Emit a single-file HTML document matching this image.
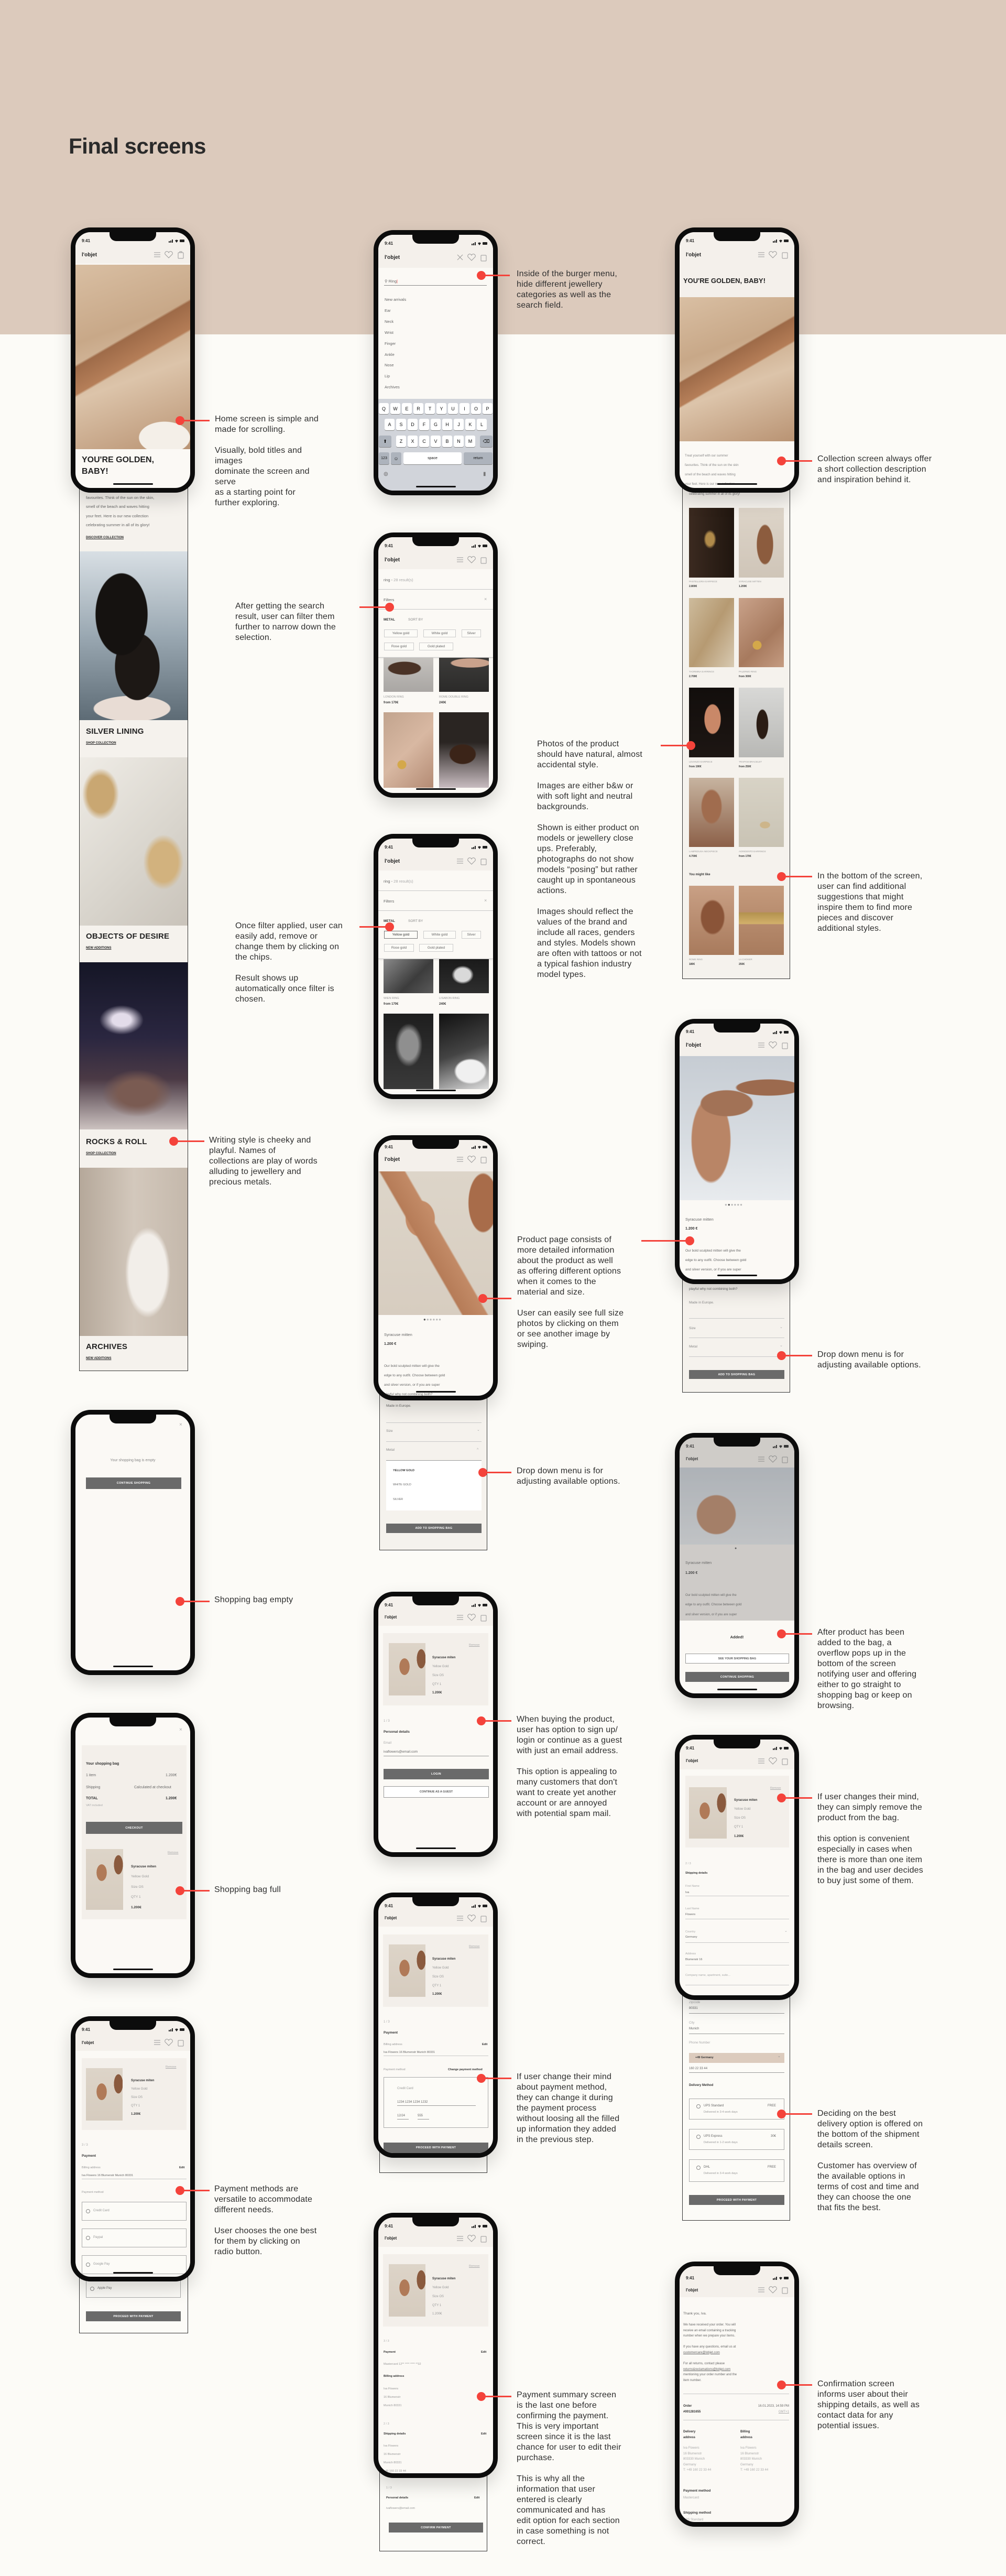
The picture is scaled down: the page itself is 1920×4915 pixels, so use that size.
<!DOCTYPE html>
<html><head><meta charset="utf-8">
<style>
*{box-sizing:border-box}
body{margin:0;width:1920px;height:4915px;position:relative;background:#fcfbf7;font-family:"Liberation Sans",sans-serif;overflow:hidden;color:#333}
.band{position:absolute;left:0;top:0;width:1920px;height:638px;background:#dccabc}
h1{position:absolute;left:131px;top:255px;margin:0;font-size:42px;font-weight:bold;color:#2a2a2a;letter-spacing:-0.5px}
.ph{position:absolute;width:237px;height:506px;border:9px solid #0c0c0c;border-radius:38px;background:#fbf9f5;overflow:hidden;box-shadow:0 14px 34px rgba(0,0,0,.16);z-index:3}
.notch{position:absolute;left:65px;top:-1px;width:89px;height:18px;background:#0c0c0c;border-radius:0 0 13px 13px;z-index:5}
.sb{position:absolute;left:0;top:0;width:100%;height:60px;background:#f4f0eb}
.tm{position:absolute;left:12px;top:12px;font-size:8px;font-weight:bold;color:#222}
.sic{position:absolute;right:11px;top:13px}
.lg{position:absolute;left:12px;top:38px;font-size:10px;font-weight:bold;color:#222}
.hic{position:absolute;right:9px;top:35px}
.hb{position:absolute;left:72px;bottom:6px;width:76px;height:3px;background:#111;border-radius:2px;z-index:6}
.t{position:absolute;font-size:7px;color:#666;white-space:nowrap;line-height:1.2}
.b{font-weight:bold;color:#333}
.btn{position:absolute;background:#6a6a6a;color:#fff;font-size:5.5px;font-weight:bold;text-align:center;letter-spacing:.3px;display:flex;align-items:center;justify-content:center}
.obtn{position:absolute;border:1px solid #999;color:#555;font-size:5.5px;font-weight:bold;text-align:center;display:flex;align-items:center;justify-content:center;background:#fff}
.ln{position:absolute;height:1px;background:#c8c8c8}
.st{position:absolute;background:#f5f2ed;border:1px solid #333;border-top:none;z-index:1;overflow:hidden}
.stw{background:#fcfbf7}
.card{position:absolute;left:9px;width:201px;height:138px;background:#f3efea}
.cimg{position:absolute;left:11px;top:19px;width:70px;height:100px;background:radial-gradient(ellipse 14px 30px at 62px 30px,#8a5a3e 60%,transparent 62%),radial-gradient(ellipse 16px 26px at 30px 45px,#b07a58 60%,transparent 62%),linear-gradient(#ddd4c8,#d6ccbf)}
.img{position:absolute}
.chip{position:absolute;height:15px;border:1px solid #ccc;font-size:6.5px;color:#666;display:flex;align-items:center;justify-content:center;background:#fcfbf7}
.box{position:absolute;border:1px solid #aaa;background:#fcfbf7}
.rad{position:absolute;width:8px;height:8px;border:1px solid #888;border-radius:50%}
.dot{position:absolute;width:17px;height:17px;margin:-8px 0 0 -8px;background:#f4433b;border-radius:50%;z-index:8}
.line{position:absolute;height:3px;margin-top:-1px;background:#f4433b;z-index:7}
.an{position:absolute;font-size:16px;line-height:20px;color:#2e2e2e;white-space:nowrap;letter-spacing:.2px;z-index:8}
.key{position:absolute;background:#fff;border-radius:3px;font-size:9px;color:#111;display:flex;align-items:center;justify-content:center;box-shadow:0 1px 0 #888}
.title{position:absolute;font-size:15px;font-weight:bold;color:#222;letter-spacing:.2px}
.sub{position:absolute;font-size:6px;font-weight:bold;color:#222;text-decoration:underline}
</style></head><body>
<div class="band"></div>
<h1>Final screens</h1>

<!-- ===== COLUMN 1 ===== -->
<!-- Home strip -->
<div class="st" style="left:151px;top:900px;width:208px;height:1716px">
  <div class="t" style="left:12px;top:45px;font-size:7.5px">favourites. Think of the sun on the skin,</div>
  <div class="t" style="left:12px;top:62px;font-size:7.5px">smell of the beach and waves hitting</div>
  <div class="t" style="left:12px;top:80px;font-size:7.5px">your feet. Here is our new collection</div>
  <div class="t" style="left:12px;top:97px;font-size:7.5px">celebrating summer in all of its glory!</div>
  <div class="sub" style="left:12px;top:123px">DISCOVER COLLECTION</div>
  <div class="img" style="left:0;top:152px;width:208px;height:322px;background:radial-gradient(ellipse 70px 110px at 80px 120px,#151210 70%,transparent 72%),radial-gradient(ellipse 60px 90px at 110px 220px,#1d1815 70%,transparent 72%),radial-gradient(ellipse 120px 40px at 100px 300px,#e8dcd4 60%,transparent 62%),linear-gradient(#d8dfe4,#9aa8b2 50%,#5d6b75)"></div>
  <div class="title" style="left:12px;top:487px">SILVER LINING</div>
  <div class="sub" style="left:12px;top:515px">SHOP COLLECTION</div>
  <div class="img" style="left:0;top:545px;width:208px;height:321px;background:radial-gradient(ellipse 50px 70px at 40px 70px,#c9a772 50%,transparent 70%),radial-gradient(ellipse 55px 75px at 160px 200px,#d2b27e 50%,transparent 70%),linear-gradient(135deg,#efece6,#d8d4cc 60%,#c9c3ba)"></div>
  <div class="title" style="left:12px;top:878px">OBJECTS OF DESIRE</div>
  <div class="sub" style="left:12px;top:906px">NEW ADDITIONS</div>
  <div class="img" style="left:0;top:936px;width:208px;height:319px;background:radial-gradient(ellipse 60px 40px at 80px 110px,#e3dcea 30%,transparent 70%),radial-gradient(ellipse 90px 60px at 110px 250px,#7a5b52 40%,transparent 75%),linear-gradient(#151626,#2a2640 45%,#4b3a45 70%,#ccc2c0)"></div>
  <div class="title" style="left:12px;top:1270px">ROCKS &amp; ROLL</div>
  <div class="sub" style="left:12px;top:1298px">SHOP COLLECTION</div>
  <div class="img" style="left:0;top:1328px;width:208px;height:321px;background:radial-gradient(ellipse 60px 120px at 130px 200px,#f2eee9 60%,transparent 72%),linear-gradient(90deg,#b5a89a,#d3c8bc 50%,#c4b8ab)"></div>
  <div class="title" style="left:12px;top:1661px">ARCHIVES</div>
  <div class="sub" style="left:12px;top:1689px">NEW ADDITIONS</div>
</div>
<!-- Home phone -->
<div class="ph" style="left:135px;top:434px">
  <div class="notch"></div>
  <div class="sb"></div><div class="tm">9:41</div>
  <svg class="sic" width="30" height="7"><rect x="0" y="4" width="2" height="3" fill="#222"/><rect x="3" y="3" width="2" height="4" fill="#222"/><rect x="6" y="1" width="2" height="6" fill="#222"/><path d="M12 3 Q15 0 18 3 L15 7Z" fill="#222"/><rect x="21" y="1" width="9" height="5" rx="1" fill="#222"/></svg>
  <div class="lg">l'objet</div>
  <svg class="hic" width="62" height="16"><g fill="none" stroke="#999" stroke-width="1"><path d="M2 4h12M2 8h12M2 12h12"/><path d="M30 14 L23 7 A3.5 3.5 0 0 1 30 4 A3.5 3.5 0 0 1 37 7 Z"/><rect x="48" y="4" width="10" height="11" rx="1"/><path d="M51 4 V2 H55 V4"/></g></svg>
  <div class="img" style="left:0;top:62px;width:219px;height:352px;background:linear-gradient(150deg,transparent 40%,rgba(150,95,60,.85) 41%,rgba(175,115,75,.85) 52%,transparent 53%),radial-gradient(ellipse 80px 50px at 170px 330px,#f4efe8 60%,transparent 62%),linear-gradient(160deg,#d9bfa3,#c8a888 35%,#dcc4aa 60%,#b99373)"></div>
  <div class="t b" style="left:12px;top:424px;font-size:16px;line-height:22px;color:#222;white-space:normal;width:200px">YOU'RE GOLDEN,<br>BABY!</div>
  <div class="hb"></div>
</div>

<!-- Bag empty -->
<div class="ph" style="left:135px;top:2690px">
  <div class="notch"></div>
  <div class="t" style="left:198px;top:14px;font-size:10px;color:#aaa">×</div>
  <div class="t" style="left:0;width:219px;text-align:center;top:84px;color:#888">Your shopping bag is empty</div>
  <div class="btn" style="left:20px;top:120px;width:182px;height:22px">CONTINUE SHOPPING</div>
  <div class="hb"></div>
</div>

<!-- Bag full -->
<div class="ph" style="left:135px;top:3268px">
  <div class="notch"></div>
  <div class="t" style="left:198px;top:18px;font-size:10px;color:#aaa">×</div>
  <div class="card" style="left:12px;top:53px;width:200px;height:332px"></div>
  <div class="t b" style="left:20px;top:85px">Your shopping bag</div>
  <div class="t" style="left:20px;top:107px">1 item</div><div class="t" style="left:172px;top:107px">1.200€</div>
  <div class="t" style="left:20px;top:130px">Shipping</div><div class="t" style="left:112px;top:130px">Calculated at checkout</div>
  <div class="t b" style="left:20px;top:151px">TOTAL</div><div class="t b" style="left:172px;top:151px">1.200€</div>
  <div class="t" style="left:20px;top:165px;font-size:5.5px;color:#aaa">VAT included</div>
  <div class="btn" style="left:20px;top:199px;width:184px;height:23px">CHECKOUT</div>
  <div class="cimg" style="left:20px;top:251px;width:71px;height:116px"></div>
  <div class="t" style="left:176px;top:255px;font-size:5.5px;text-decoration:underline;color:#aaa">Remove</div>
  <div class="t b" style="left:106px;top:281px;font-size:6.5px">Syracuse miten</div>
  <div class="t" style="left:106px;top:300px;font-size:6.5px;color:#999">Yellow Gold</div>
  <div class="t" style="left:106px;top:320px;font-size:6.5px;color:#999">Size OS</div>
  <div class="t" style="left:106px;top:339px;font-size:6.5px;color:#999">QTY 1</div>
  <div class="t b" style="left:106px;top:359px;font-size:6.5px">1.200€</div>
  <div class="hb"></div>
</div>

<!-- Payment col1 strip -->
<div class="st stw" style="left:151px;top:4300px;width:208px;height:152px">
  <div class="box" style="left:12px;top:51px;width:181px;height:33px"></div>
  <div class="rad" style="left:20px;top:63px"></div><div class="t" style="left:34px;top:63px;font-size:6px">Apple Pay</div>
  <div class="btn" style="left:12px;top:110px;width:181px;height:19px">PROCEED WITH PAYMENT</div>
</div>
<div class="ph" style="left:135px;top:3847px">
  <div class="notch"></div>
  <div class="sb" style="height:57px"></div><div class="tm">9:41</div>
  <svg class="sic" width="30" height="7"><rect x="0" y="4" width="2" height="3" fill="#222"/><rect x="3" y="3" width="2" height="4" fill="#222"/><rect x="6" y="1" width="2" height="6" fill="#222"/><path d="M12 3 Q15 0 18 3 L15 7Z" fill="#222"/><rect x="21" y="1" width="9" height="5" rx="1" fill="#222"/></svg>
  <div class="lg" style="top:37px;font-size:8px">l'objet</div>
  <svg class="hic" width="62" height="16" style="top:33px"><g fill="none" stroke="#999" stroke-width="1"><path d="M2 4h12M2 8h12M2 12h12"/><path d="M30 14 L23 7 A3.5 3.5 0 0 1 30 4 A3.5 3.5 0 0 1 37 7 Z"/><rect x="48" y="4" width="10" height="11" rx="1"/></g></svg>
  <div class="card" style="left:12px;top:71px;width:200px;height:137px"><div class="cimg" style="left:8px;top:19px"></div>
   <div class="t" style="left:160px;top:14px;font-size:5.5px;text-decoration:underline;color:#aaa">Remove</div>
   <div class="t b" style="left:94px;top:40px;font-size:6px">Syracuse miten</div><div class="t" style="left:94px;top:56px;font-size:6px;color:#999">Yellow Gold</div><div class="t" style="left:94px;top:72px;font-size:6px;color:#999">Size OS</div><div class="t" style="left:94px;top:88px;font-size:6px;color:#999">QTY 1</div><div class="t b" style="left:94px;top:104px;font-size:6px">1.200€</div></div>
  <div class="t" style="left:12px;top:234px;font-size:6px;color:#aaa">3 / 3</div>
  <div class="t b" style="left:12px;top:254px;font-size:6.5px">Payment</div>
  <div class="t" style="left:12px;top:277px;font-size:5.5px;color:#999">Billing address</div><div class="t b" style="left:198px;top:277px;font-size:5.5px">Edit</div>
  <div class="t" style="left:12px;top:292px;font-size:5.5px">Iva Flowers 16 Blumenstr Munich 80331</div><div class="ln" style="left:12px;top:301px;width:200px"></div>
  <div class="t" style="left:12px;top:324px;font-size:5.5px;color:#999">Payment method</div>
  <div class="box" style="left:12px;top:345px;width:200px;height:36px"></div><div class="rad" style="left:20px;top:359px"></div><div class="t" style="left:34px;top:359px;font-size:6px;color:#999">Credit Card</div>
  <div class="box" style="left:12px;top:396px;width:200px;height:36px"></div><div class="rad" style="left:20px;top:410px"></div><div class="t" style="left:34px;top:410px;font-size:6px;color:#999">Paypal</div>
  <div class="box" style="left:12px;top:447px;width:200px;height:36px"></div><div class="rad" style="left:20px;top:461px"></div><div class="t" style="left:34px;top:461px;font-size:6px;color:#999">Google Pay</div>
  <div class="hb"></div>
</div>

<!-- ===== COLUMN 2 ===== -->
<!-- Keyboard menu -->
<div class="ph" style="left:713px;top:439px">
  <div class="notch"></div>
  <div class="sb" style="height:63px"></div><div class="tm">9:41</div>
  <svg class="sic" width="30" height="7"><rect x="0" y="4" width="2" height="3" fill="#222"/><rect x="3" y="3" width="2" height="4" fill="#222"/><rect x="6" y="1" width="2" height="6" fill="#222"/><path d="M12 3 Q15 0 18 3 L15 7Z" fill="#222"/><rect x="21" y="1" width="9" height="5" rx="1" fill="#222"/></svg>
  <div class="lg">l'objet</div>
  <svg class="hic" width="62" height="16"><g fill="none" stroke="#999" stroke-width="1"><path d="M3 3 L13 13 M13 3 L3 13"/><path d="M30 14 L23 7 A3.5 3.5 0 0 1 30 4 A3.5 3.5 0 0 1 37 7 Z"/><rect x="48" y="4" width="10" height="11" rx="1"/></g></svg>
  <div class="t" style="left:12px;top:84px;font-size:7.5px">⚲ Ring<span style="color:#e33">|</span></div>
  <div class="ln" style="left:11px;top:96px;width:196px;background:#888"></div>
  <div class="t" style="left:12px;top:119px;font-size:7.5px">New arrivals</div>
  <div class="t" style="left:12px;top:140px;font-size:7.5px">Ear</div>
  <div class="t" style="left:12px;top:161px;font-size:7.5px">Neck</div>
  <div class="t" style="left:12px;top:182px;font-size:7.5px">Wrist</div>
  <div class="t" style="left:12px;top:203px;font-size:7.5px">Finger</div>
  <div class="t" style="left:12px;top:224px;font-size:7.5px">Ankle</div>
  <div class="t" style="left:12px;top:244px;font-size:7.5px">Nose</div>
  <div class="t" style="left:12px;top:265px;font-size:7.5px">Lip</div>
  <div class="t" style="left:12px;top:286px;font-size:7.5px">Archives</div>
  <div style="position:absolute;left:0;top:313px;width:219px;height:180px;background:#d1d4da"></div>
  <div class="key" style="left:1px;top:321px;width:19px;height:21px">Q</div><div class="key" style="left:23px;top:321px;width:19px;height:21px">W</div><div class="key" style="left:45px;top:321px;width:19px;height:21px">E</div><div class="key" style="left:67px;top:321px;width:19px;height:21px">R</div><div class="key" style="left:89px;top:321px;width:19px;height:21px">T</div><div class="key" style="left:111px;top:321px;width:19px;height:21px">Y</div><div class="key" style="left:133px;top:321px;width:19px;height:21px">U</div><div class="key" style="left:155px;top:321px;width:19px;height:21px">I</div><div class="key" style="left:177px;top:321px;width:19px;height:21px">O</div><div class="key" style="left:199px;top:321px;width:19px;height:21px">P</div>
  <div class="key" style="left:12px;top:351px;width:19px;height:22px">A</div><div class="key" style="left:34px;top:351px;width:19px;height:22px">S</div><div class="key" style="left:56px;top:351px;width:19px;height:22px">D</div><div class="key" style="left:78px;top:351px;width:19px;height:22px">F</div><div class="key" style="left:100px;top:351px;width:19px;height:22px">G</div><div class="key" style="left:122px;top:351px;width:19px;height:22px">H</div><div class="key" style="left:144px;top:351px;width:19px;height:22px">J</div><div class="key" style="left:166px;top:351px;width:19px;height:22px">K</div><div class="key" style="left:188px;top:351px;width:19px;height:22px">L</div>
  <div class="key" style="left:1px;top:383px;width:24px;height:22px;background:#adb3bc">⬆</div><div class="key" style="left:34px;top:383px;width:19px;height:22px">Z</div><div class="key" style="left:56px;top:383px;width:19px;height:22px">X</div><div class="key" style="left:78px;top:383px;width:19px;height:22px">C</div><div class="key" style="left:100px;top:383px;width:19px;height:22px">V</div><div class="key" style="left:122px;top:383px;width:19px;height:22px">B</div><div class="key" style="left:144px;top:383px;width:19px;height:22px">N</div><div class="key" style="left:166px;top:383px;width:19px;height:22px">M</div><div class="key" style="left:194px;top:383px;width:24px;height:22px;background:#adb3bc">⌫</div>
  <div class="key" style="left:1px;top:415px;width:20px;height:23px;background:#adb3bc;font-size:7px">123</div><div class="key" style="left:24px;top:415px;width:20px;height:23px;background:#adb3bc">☺</div><div class="key" style="left:48px;top:415px;width:111px;height:23px;font-size:7px">space</div><div class="key" style="left:163px;top:415px;width:55px;height:23px;background:#adb3bc;font-size:7px">return</div>
  <div class="t" style="left:10px;top:451px;font-size:10px;color:#777">◍</div><div class="t" style="left:200px;top:451px;font-size:10px;color:#777">▮</div>
  <div class="hb"></div>
</div>

<!-- Search result & filters (two phones) -->
<div class="ph" style="left:713px;top:1016px">
  <div class="notch"></div>
  <div class="sb" style="height:61px"></div><div class="tm">9:41</div>
  <svg class="sic" width="30" height="7"><rect x="0" y="4" width="2" height="3" fill="#222"/><rect x="3" y="3" width="2" height="4" fill="#222"/><rect x="6" y="1" width="2" height="6" fill="#222"/><path d="M12 3 Q15 0 18 3 L15 7Z" fill="#222"/><rect x="21" y="1" width="9" height="5" rx="1" fill="#222"/></svg>
  <div class="lg">l'objet</div>
  <svg class="hic" width="62" height="16"><g fill="none" stroke="#999" stroke-width="1"><path d="M2 4h12M2 8h12M2 12h12"/><path d="M30 14 L23 7 A3.5 3.5 0 0 1 30 4 A3.5 3.5 0 0 1 37 7 Z"/><rect x="48" y="4" width="10" height="11" rx="1"/></g></svg>
  <div class="t" style="left:10px;top:77px;font-size:7.5px">ring - <span style="color:#aaa">28 result(s)</span></div>
  <div class="ln" style="left:0;top:99px;width:219px"></div>
  <div class="t" style="left:10px;top:115px;font-size:7.5px">Filters</div><div class="t" style="left:202px;top:113px;font-size:9px;color:#aaa">×</div>
  <div class="ln" style="left:0;top:137px;width:219px"></div>
  <div class="t b" style="left:10px;top:154px;font-size:6.5px">METAL</div><div class="t" style="left:57px;top:154px;font-size:6.5px;color:#888">SORT BY</div>
  <div class="chip" style="left:11px;top:176px;width:64px">Yellow gold</div><div class="chip" style="left:86px;top:176px;width:62px">White gold</div><div class="chip" style="left:159px;top:176px;width:37px">Silver</div>
  <div class="chip" style="left:11px;top:201px;width:57px">Rose gold</div><div class="chip" style="left:78px;top:201px;width:65px">Gold plated</div>
  <div class="ln" style="left:0;top:229px;width:219px;box-shadow:0 1px 3px rgba(0,0,0,.2)"></div>
  <div class="img" style="left:10px;top:230px;width:95px;height:65px;background:radial-gradient(ellipse 50px 20px at 40px 20px,#4a3226 60%,transparent 65%),linear-gradient(#c4c1bd,#a9a6a3)"></div>
  <div class="img" style="left:116px;top:230px;width:95px;height:65px;background:radial-gradient(ellipse 60px 14px at 60px 10px,#c9a28c 60%,transparent 65%),linear-gradient(#3d3c3a,#2b2a29)"></div>
  <div class="t" style="left:10px;top:302px;font-size:5.5px;color:#999">LONDON RING</div><div class="t b" style="left:10px;top:313px;font-size:6px">from 170€</div>
  <div class="t" style="left:116px;top:302px;font-size:5.5px;color:#999">ROME DOUBLE RING</div><div class="t b" style="left:116px;top:313px;font-size:6px">240€</div>
  <div class="img" style="left:10px;top:334px;width:95px;height:144px;background:radial-gradient(circle at 35px 100px,#d4a84a 8px,transparent 9px),linear-gradient(135deg,#c2a48e,#d8b8a2 50%,#b48b74)"></div>
  <div class="img" style="left:116px;top:334px;width:95px;height:144px;background:radial-gradient(ellipse 40px 30px at 45px 80px,#3b2418 60%,transparent 65%),linear-gradient(#2a2522 40%,#c8bcc0)"></div>
  <div class="hb"></div>
</div>
<div class="ph" style="left:713px;top:1591px">
  <div class="notch"></div>
  <div class="sb" style="height:61px"></div><div class="tm">9:41</div>
  <svg class="sic" width="30" height="7"><rect x="0" y="4" width="2" height="3" fill="#222"/><rect x="3" y="3" width="2" height="4" fill="#222"/><rect x="6" y="1" width="2" height="6" fill="#222"/><path d="M12 3 Q15 0 18 3 L15 7Z" fill="#222"/><rect x="21" y="1" width="9" height="5" rx="1" fill="#222"/></svg>
  <div class="lg">l'objet</div>
  <svg class="hic" width="62" height="16"><g fill="none" stroke="#999" stroke-width="1"><path d="M2 4h12M2 8h12M2 12h12"/><path d="M30 14 L23 7 A3.5 3.5 0 0 1 30 4 A3.5 3.5 0 0 1 37 7 Z"/><rect x="48" y="4" width="10" height="11" rx="1"/></g></svg>
  <div class="t" style="left:10px;top:77px;font-size:7.5px">ring - <span style="color:#aaa">28 result(s)</span></div>
  <div class="ln" style="left:0;top:99px;width:219px"></div>
  <div class="t" style="left:10px;top:115px;font-size:7.5px">Filters</div><div class="t" style="left:202px;top:113px;font-size:9px;color:#aaa">×</div>
  <div class="ln" style="left:0;top:137px;width:219px"></div>
  <div class="t b" style="left:10px;top:154px;font-size:6.5px">METAL</div><div class="t" style="left:57px;top:154px;font-size:6.5px;color:#888">SORT BY</div>
  <div class="chip" style="left:11px;top:176px;width:64px;border-color:#777;color:#333">Yellow gold</div><div class="chip" style="left:86px;top:176px;width:62px">White gold</div><div class="chip" style="left:159px;top:176px;width:37px">Silver</div>
  <div class="chip" style="left:11px;top:201px;width:57px">Rose gold</div><div class="chip" style="left:78px;top:201px;width:65px">Gold plated</div>
  <div class="ln" style="left:0;top:229px;width:219px;box-shadow:0 1px 3px rgba(0,0,0,.2)"></div>
  <div class="img" style="left:10px;top:230px;width:95px;height:65px;background:linear-gradient(135deg,#8a8a8a,#3c3c3c 60%,#5a5a5a)"></div>
  <div class="img" style="left:116px;top:230px;width:95px;height:65px;background:radial-gradient(ellipse 30px 25px at 45px 30px,#d9d9d9 50%,transparent 70%),linear-gradient(#1a1a1a,#2e2e2e)"></div>
  <div class="t" style="left:10px;top:302px;font-size:5.5px;color:#999">WIEN RING</div><div class="t b" style="left:10px;top:313px;font-size:6px">from 170€</div>
  <div class="t" style="left:116px;top:302px;font-size:5.5px;color:#999">LISABON RING</div><div class="t b" style="left:116px;top:313px;font-size:6px">240€</div>
  <div class="img" style="left:10px;top:334px;width:95px;height:144px;background:radial-gradient(ellipse 35px 55px at 48px 60px,#8f8f8f 50%,transparent 75%),linear-gradient(#1e1e1e,#3a3a3a)"></div>
  <div class="img" style="left:116px;top:334px;width:95px;height:144px;background:radial-gradient(ellipse 45px 35px at 60px 110px,#f0f0f0 60%,transparent 70%),linear-gradient(160deg,#111,#444 50%,#ddd)"></div>
  <div class="hb"></div>
</div>

<!-- Product page strip col2 -->
<div class="st" style="left:724px;top:2600px;width:206px;height:358px">
  <div class="t" style="left:12px;top:79px;font-size:6.5px">Made in Europe.</div>
  <div class="ln" style="left:12px;top:114px;width:182px"></div>
  <div class="t" style="left:12px;top:127px;font-size:6.5px;color:#888">Size</div><div class="t" style="left:185px;top:125px;color:#aaa">⌄</div>
  <div class="ln" style="left:12px;top:150px;width:182px"></div>
  <div class="t" style="left:12px;top:163px;font-size:6.5px;color:#888">Metal</div><div class="t" style="left:185px;top:163px;color:#aaa">^</div>
  <div class="ln" style="left:12px;top:186px;width:182px;background:#999"></div>
  <div style="position:absolute;left:12px;top:187px;width:182px;height:95px;background:#fff"></div>
  <div class="t b" style="left:25px;top:203px;font-size:5.5px">YELLOW GOLD</div>
  <div class="t" style="left:25px;top:230px;font-size:5.5px">WHITE GOLD</div>
  <div class="t" style="left:25px;top:258px;font-size:5.5px">SILVER</div>
  <div class="btn" style="left:12px;top:307px;width:182px;height:18px">ADD TO SHOPPING BAG</div>
</div>
<div class="ph" style="left:713px;top:2166px">
  <div class="notch"></div>
  <div class="sb" style="height:60px"></div><div class="tm" style="top:9px">9:41</div>
  <svg class="sic" width="30" height="7" style="top:10px"><rect x="0" y="4" width="2" height="3" fill="#222"/><rect x="3" y="3" width="2" height="4" fill="#222"/><rect x="6" y="1" width="2" height="6" fill="#222"/><path d="M12 3 Q15 0 18 3 L15 7Z" fill="#222"/><rect x="21" y="1" width="9" height="5" rx="1" fill="#222"/></svg>
  <div class="lg" style="top:32px">l'objet</div>
  <svg class="hic" width="62" height="16" style="top:29px"><g fill="none" stroke="#999" stroke-width="1"><path d="M2 4h12M2 8h12M2 12h12"/><path d="M30 14 L23 7 A3.5 3.5 0 0 1 30 4 A3.5 3.5 0 0 1 37 7 Z"/><rect x="48" y="4" width="10" height="11" rx="1"/></g></svg>
  <div class="img" style="left:0;top:60px;width:219px;height:274px;background:radial-gradient(ellipse 45px 90px at 200px 60px,#a86c4a 60%,transparent 64%),linear-gradient(60deg,transparent 42%,#b67c58 43%,#c28a66 55%,transparent 56%),radial-gradient(ellipse 45px 55px at 80px 90px,#c48c68 60%,transparent 64%),linear-gradient(#ddd5c9,#d7cdc0)"></div>
  <div class="t" style="left:86px;top:338px;font-size:8px;color:#bbb;letter-spacing:1px"><span style="color:#555">●</span>●●●●●</div>
  <div class="t" style="left:11px;top:367px;font-size:7.5px">Syracuse mitten</div>
  <div class="t b" style="left:11px;top:386px;font-size:7px">1.200 €</div>
  <div class="t" style="left:11px;top:428px;font-size:6.5px">Our bold sculpted mitten will give the</div>
  <div class="t" style="left:11px;top:446px;font-size:6.5px">edge to any outfit. Choose between gold</div>
  <div class="t" style="left:11px;top:464px;font-size:6.5px">and silver version, or if you are super</div>
  <div class="t" style="left:11px;top:482px;font-size:6.5px">playful why not combining both?</div>
  <div class="hb"></div>
</div>

<!-- Login -->
<div class="ph" style="left:713px;top:3037px">
  <div class="notch"></div>
  <div class="sb" style="height:56px"></div><div class="tm">9:41</div>
  <svg class="sic" width="30" height="7"><rect x="0" y="4" width="2" height="3" fill="#222"/><rect x="3" y="3" width="2" height="4" fill="#222"/><rect x="6" y="1" width="2" height="6" fill="#222"/><path d="M12 3 Q15 0 18 3 L15 7Z" fill="#222"/><rect x="21" y="1" width="9" height="5" rx="1" fill="#222"/></svg>
  <div class="lg" style="top:35px;font-size:8px">l'objet</div>
  <svg class="hic" width="62" height="16" style="top:32px"><g fill="none" stroke="#999" stroke-width="1"><path d="M2 4h12M2 8h12M2 12h12"/><path d="M30 14 L23 7 A3.5 3.5 0 0 1 30 4 A3.5 3.5 0 0 1 37 7 Z"/><rect x="48" y="4" width="10" height="11" rx="1"/></g></svg>
  <div class="card" style="top:70px"><div class="cimg"></div>
   <div class="t" style="left:164px;top:20px;font-size:5.5px;text-decoration:underline;color:#aaa">Remove</div>
   <div class="t b" style="left:94px;top:44px;font-size:6px">Syracuse miten</div><div class="t" style="left:94px;top:61px;font-size:6px;color:#999">Yellow Gold</div><div class="t" style="left:94px;top:78px;font-size:6px;color:#999">Size OS</div><div class="t" style="left:94px;top:95px;font-size:6px;color:#999">QTY 1</div><div class="t b" style="left:94px;top:111px;font-size:6px">1.200€</div></div>
  <div class="t" style="left:10px;top:235px;font-size:6px;color:#aaa">1 / 3</div>
  <div class="t b" style="left:10px;top:255px;font-size:6.5px">Personal details</div>
  <div class="t" style="left:10px;top:277px;font-size:6px;color:#aaa">Email</div>
  <div class="t" style="left:10px;top:293px;font-size:6.5px">ivaflowers@email.com</div><div class="ln" style="left:10px;top:304px;width:201px;background:#999"></div>
  <div class="btn" style="left:10px;top:329px;width:201px;height:20px">LOGIN</div>
  <div class="obtn" style="left:10px;top:362px;width:201px;height:22px">CONTINUE AS A GUEST</div>
  <div class="hb"></div>
</div>

<!-- Payment change -->
<div class="st stw" style="left:724px;top:4090px;width:206px;height:56px"></div>
<div class="ph" style="left:713px;top:3611px">
  <div class="notch"></div>
  <div class="sb" style="height:56px"></div><div class="tm">9:41</div>
  <svg class="sic" width="30" height="7"><rect x="0" y="4" width="2" height="3" fill="#222"/><rect x="3" y="3" width="2" height="4" fill="#222"/><rect x="6" y="1" width="2" height="6" fill="#222"/><path d="M12 3 Q15 0 18 3 L15 7Z" fill="#222"/><rect x="21" y="1" width="9" height="5" rx="1" fill="#222"/></svg>
  <div class="lg" style="top:35px;font-size:8px">l'objet</div>
  <svg class="hic" width="62" height="16" style="top:32px"><g fill="none" stroke="#999" stroke-width="1"><path d="M2 4h12M2 8h12M2 12h12"/><path d="M30 14 L23 7 A3.5 3.5 0 0 1 30 4 A3.5 3.5 0 0 1 37 7 Z"/><rect x="48" y="4" width="10" height="11" rx="1"/></g></svg>
  <div class="card" style="top:71px"><div class="cimg"></div>
   <div class="t" style="left:164px;top:20px;font-size:5.5px;text-decoration:underline;color:#aaa">Remove</div>
   <div class="t b" style="left:94px;top:44px;font-size:6px">Syracuse miten</div><div class="t" style="left:94px;top:61px;font-size:6px;color:#999">Yellow Gold</div><div class="t" style="left:94px;top:78px;font-size:6px;color:#999">Size OS</div><div class="t" style="left:94px;top:95px;font-size:6px;color:#999">QTY 1</div><div class="t b" style="left:94px;top:111px;font-size:6px">1.200€</div></div>
  <div class="t" style="left:10px;top:235px;font-size:6px;color:#aaa">1 / 3</div>
  <div class="t b" style="left:10px;top:255px;font-size:6.5px">Payment</div>
  <div class="t" style="left:10px;top:278px;font-size:5.5px;color:#999">Billing address</div><div class="t b" style="left:198px;top:278px;font-size:5.5px">Edit</div>
  <div class="t" style="left:10px;top:293px;font-size:5.5px">Iva Flowers 16 Blumenstr Munich 80331</div><div class="ln" style="left:10px;top:302px;width:200px"></div>
  <div class="t" style="left:10px;top:326px;font-size:5.5px;color:#999">Payment method</div><div class="t b" style="left:133px;top:326px;font-size:5.5px">Change payment method</div>
  <div class="box" style="left:10px;top:343px;width:200px;height:97px"></div>
  <div class="t" style="left:36px;top:362px;font-size:6px;color:#999">Credit Card</div>
  <div class="t" style="left:36px;top:388px;font-size:6px">1234 1234 1234 1232</div><div class="ln" style="left:36px;top:397px;width:150px;background:#999"></div>
  <div class="t" style="left:36px;top:414px;font-size:6px">12/24</div><div class="ln" style="left:36px;top:423px;width:22px;background:#999"></div>
  <div class="t" style="left:75px;top:414px;font-size:6px">555</div><div class="ln" style="left:75px;top:423px;width:22px;background:#999"></div>
  <div class="btn" style="left:10px;top:468px;width:200px;height:20px">PROCEED WITH PAYMENT</div>
</div>

<!-- Summary -->
<div class="st" style="left:724px;top:4700px;width:206px;height:168px;background:#fcfbf7">
  <div class="t" style="left:12px;top:44px;font-size:5.5px;color:#aaa">1 / 3</div>
  <div class="t b" style="left:12px;top:63px;font-size:5.5px">Personal details</div><div class="t b" style="left:180px;top:63px;font-size:5.5px">Edit</div>
  <div class="t" style="left:12px;top:83px;font-size:5.5px;color:#999">ivaflowers@email.com</div>
  <div class="btn" style="left:17px;top:113px;width:180px;height:19px">CONFIRM PAYMENT</div>
</div>
<div class="ph" style="left:713px;top:4222px">
  <div class="notch"></div>
  <div class="sb" style="height:56px"></div><div class="tm">9:41</div>
  <svg class="sic" width="30" height="7"><rect x="0" y="4" width="2" height="3" fill="#222"/><rect x="3" y="3" width="2" height="4" fill="#222"/><rect x="6" y="1" width="2" height="6" fill="#222"/><path d="M12 3 Q15 0 18 3 L15 7Z" fill="#222"/><rect x="21" y="1" width="9" height="5" rx="1" fill="#222"/></svg>
  <div class="lg" style="top:35px;font-size:8px">l'objet</div>
  <svg class="hic" width="62" height="16" style="top:32px"><g fill="none" stroke="#999" stroke-width="1"><path d="M2 4h12M2 8h12M2 12h12"/><path d="M30 14 L23 7 A3.5 3.5 0 0 1 30 4 A3.5 3.5 0 0 1 37 7 Z"/><rect x="48" y="4" width="10" height="11" rx="1"/></g></svg>
  <div class="card" style="top:70px"><div class="cimg"></div>
   <div class="t" style="left:164px;top:20px;font-size:5.5px;text-decoration:underline;color:#aaa">Remove</div>
   <div class="t b" style="left:94px;top:44px;font-size:6px">Syracuse miten</div><div class="t" style="left:94px;top:61px;font-size:6px;color:#999">Yellow Gold</div><div class="t" style="left:94px;top:78px;font-size:6px;color:#999">Size OS</div><div class="t" style="left:94px;top:95px;font-size:6px;color:#999">QTY 1</div><div class="t" style="left:94px;top:111px;font-size:6px;color:#999">1.200€</div></div>
  <div class="t" style="left:10px;top:233px;font-size:5.5px;color:#aaa">3 / 3</div>
  <div class="t b" style="left:10px;top:254px;font-size:5.5px">Payment</div><div class="t b" style="left:196px;top:254px;font-size:5.5px">Edit</div>
  <div class="t" style="left:10px;top:277px;font-size:5.5px;color:#999">Mastercard 12** **** **** **32</div>
  <div class="t b" style="left:10px;top:300px;font-size:5.5px">Billing address</div>
  <div class="t" style="left:10px;top:324px;font-size:5.5px;color:#999">Iva Flowers</div>
  <div class="t" style="left:10px;top:340px;font-size:5.5px;color:#999">16 Blumenstr</div>
  <div class="t" style="left:10px;top:356px;font-size:5.5px;color:#999">Munich 80331</div>
  <div class="t" style="left:10px;top:391px;font-size:5.5px;color:#aaa">2 / 3</div>
  <div class="t b" style="left:10px;top:410px;font-size:5.5px">Shipping details</div><div class="t b" style="left:196px;top:410px;font-size:5.5px">Edit</div>
  <div class="t" style="left:10px;top:433px;font-size:5.5px;color:#999">Iva Flowers</div>
  <div class="t" style="left:10px;top:449px;font-size:5.5px;color:#999">16 Blumenstr</div>
  <div class="t" style="left:10px;top:465px;font-size:5.5px;color:#999">Munich 80331</div>
  <div class="t" style="left:10px;top:481px;font-size:5.5px;color:#999">+49 160 22 33 44</div>
</div>

<!-- ===== COLUMN 3 ===== -->
<!-- Collection strip -->
<div class="st" style="left:1302px;top:900px;width:206px;height:968px">
  <div class="t" style="left:12px;top:40px;font-size:6px">celebrating summer in all of its glory!</div>
  <div class="img" style="left:12px;top:69px;width:86px;height:133px;background:radial-gradient(ellipse 20px 30px at 40px 60px,#b08a4a 40%,transparent 60%),linear-gradient(90deg,#3b2a20,#20160f)"></div>
  <div class="img" style="left:107px;top:69px;width:86px;height:133px;background:radial-gradient(ellipse 25px 60px at 50px 70px,#8c5c3e 60%,transparent 65%),linear-gradient(#ddd4c8,#cfc5b8)"></div>
  <div class="t" style="left:12px;top:207px;font-size:4.5px;color:#999">PANTELLERIA EARPIECE</div><div class="t b" style="left:12px;top:216px;font-size:5px">2.800€</div>
  <div class="t" style="left:107px;top:207px;font-size:4.5px;color:#999">SYRACUSE MITTEN</div><div class="t b" style="left:107px;top:216px;font-size:5px">1.200€</div>
  <div class="img" style="left:12px;top:241px;width:86px;height:132px;background:linear-gradient(120deg,#cdbb9c,#b69a72 50%,#d8cab2)"></div>
  <div class="img" style="left:107px;top:241px;width:86px;height:132px;background:radial-gradient(circle at 35px 90px,#d4a84a 8px,transparent 9px),linear-gradient(135deg,#c9a28a,#a77a5e 60%,#c59c82)"></div>
  <div class="t" style="left:12px;top:379px;font-size:4.5px;color:#999">TAORMINA EARRINGS</div><div class="t b" style="left:12px;top:388px;font-size:5px">2.700€</div>
  <div class="t" style="left:107px;top:379px;font-size:4.5px;color:#999">PALERMO RING</div><div class="t b" style="left:107px;top:388px;font-size:5px">from 300€</div>
  <div class="img" style="left:12px;top:412px;width:86px;height:133px;background:radial-gradient(ellipse 25px 45px at 45px 60px,#c98868 60%,transparent 65%),linear-gradient(#120e0c,#1d1613)"></div>
  <div class="img" style="left:107px;top:412px;width:86px;height:133px;background:radial-gradient(ellipse 18px 45px at 45px 70px,#2a1c14 60%,transparent 65%),linear-gradient(#d8d8d6,#b8b8b5)"></div>
  <div class="t" style="left:12px;top:551px;font-size:4.5px;color:#999">LEVANZO EARPIECE</div><div class="t b" style="left:12px;top:560px;font-size:5px">from 190€</div>
  <div class="t" style="left:107px;top:551px;font-size:4.5px;color:#999">TRAPANI BRACELET</div><div class="t b" style="left:107px;top:560px;font-size:5px">from 250€</div>
  <div class="img" style="left:12px;top:584px;width:86px;height:132px;background:radial-gradient(ellipse 30px 50px at 43px 55px,#a06c4e 60%,transparent 68%),linear-gradient(#c7b4a0,#8c6048)"></div>
  <div class="img" style="left:107px;top:584px;width:86px;height:132px;background:radial-gradient(ellipse 15px 10px at 50px 90px,#cdb58a 60%,transparent 70%),linear-gradient(#d8d3c6,#c9c3b4)"></div>
  <div class="t" style="left:12px;top:722px;font-size:4.5px;color:#999">LAMPEDUSA NECKPIECE</div><div class="t b" style="left:12px;top:731px;font-size:5px">4.700€</div>
  <div class="t" style="left:107px;top:722px;font-size:4.5px;color:#999">AGRIGENTO EARRINGS</div><div class="t b" style="left:107px;top:731px;font-size:5px">from 170€</div>
  <div class="t b" style="left:12px;top:766px;font-size:6px">You might like</div>
  <div class="img" style="left:12px;top:790px;width:86px;height:132px;background:radial-gradient(ellipse 35px 50px at 45px 60px,#8a5438 60%,transparent 68%),linear-gradient(#c9a085,#a87a5c)"></div>
  <div class="img" style="left:107px;top:790px;width:86px;height:132px;background:linear-gradient(transparent 38%,#b3924f 39%,#d2b06a 55%,transparent 56%),linear-gradient(#c49a7c,#a87b5d)"></div>
  <div class="t" style="left:12px;top:928px;font-size:4.5px;color:#999">ROME RING</div><div class="t b" style="left:12px;top:937px;font-size:5px">180€</div>
  <div class="t" style="left:107px;top:928px;font-size:4.5px;color:#999">LA CHOKER</div><div class="t b" style="left:107px;top:937px;font-size:5px">250€</div>
</div>
<div class="ph" style="left:1288px;top:434px">
  <div class="notch"></div>
  <div class="sb" style="height:62px"></div><div class="tm">9:41</div>
  <svg class="sic" width="30" height="7"><rect x="0" y="4" width="2" height="3" fill="#222"/><rect x="3" y="3" width="2" height="4" fill="#222"/><rect x="6" y="1" width="2" height="6" fill="#222"/><path d="M12 3 Q15 0 18 3 L15 7Z" fill="#222"/><rect x="21" y="1" width="9" height="5" rx="1" fill="#222"/></svg>
  <div class="lg">l'objet</div>
  <svg class="hic" width="62" height="16"><g fill="none" stroke="#999" stroke-width="1"><path d="M2 4h12M2 8h12M2 12h12"/><path d="M30 14 L23 7 A3.5 3.5 0 0 1 30 4 A3.5 3.5 0 0 1 37 7 Z"/><rect x="48" y="4" width="10" height="11" rx="1"/></g></svg>
  <div style="position:absolute;left:0;top:62px;width:219px;height:62px;background:#f4f0eb"></div>
  <div class="t b" style="left:7px;top:85px;font-size:13px;color:#222">YOU'RE GOLDEN, BABY!</div>
  <div class="img" style="left:0;top:124px;width:219px;height:275px;background:linear-gradient(150deg,transparent 40%,rgba(150,95,60,.85) 41%,rgba(175,115,75,.85) 52%,transparent 53%),linear-gradient(160deg,#d9bfa3,#c8a888 35%,#dcc4aa 60%,#b99373)"></div>
  <div class="t" style="left:10px;top:424px;font-size:6px;color:#888">Treat yourself with our summer</div>
  <div class="t" style="left:10px;top:442px;font-size:6px;color:#888">favourites. Think of the sun on the skin</div>
  <div class="t" style="left:10px;top:460px;font-size:6px;color:#888">smell of the beach and waves hitting</div>
  <div class="t" style="left:10px;top:478px;font-size:6px;color:#888">your feet. Here is our new collection</div>
  <div class="hb"></div>
</div>

<!-- Product dropdown col3 -->
<div class="st" style="left:1302px;top:2400px;width:206px;height:257px">
  <div class="t" style="left:12px;top:56px;font-size:6.5px">playful why not combining both?</div>
  <div class="t" style="left:12px;top:82px;font-size:6.5px;color:#888">Made in Europe.</div>
  <div class="ln" style="left:12px;top:115px;width:182px"></div>
  <div class="t" style="left:12px;top:131px;font-size:6.5px;color:#888">Size</div><div class="t" style="left:185px;top:129px;color:#aaa">⌄</div>
  <div class="ln" style="left:12px;top:152px;width:182px"></div>
  <div class="t" style="left:12px;top:166px;font-size:6.5px;color:#888">Metal</div><div class="t" style="left:185px;top:164px;color:#aaa">⌄</div>
  <div class="ln" style="left:12px;top:188px;width:182px"></div>
  <div class="btn" style="left:12px;top:214px;width:182px;height:17px">ADD TO SHOPPING BAG</div>
</div>
<div class="ph" style="left:1288px;top:1944px">
  <div class="notch"></div>
  <div class="sb" style="height:62px"></div><div class="tm" style="top:11px">9:41</div>
  <svg class="sic" width="30" height="7"><rect x="0" y="4" width="2" height="3" fill="#222"/><rect x="3" y="3" width="2" height="4" fill="#222"/><rect x="6" y="1" width="2" height="6" fill="#222"/><path d="M12 3 Q15 0 18 3 L15 7Z" fill="#222"/><rect x="21" y="1" width="9" height="5" rx="1" fill="#222"/></svg>
  <div class="lg" style="top:36px">l'objet</div>
  <svg class="hic" width="62" height="16" style="top:33px"><g fill="none" stroke="#999" stroke-width="1"><path d="M2 4h12M2 8h12M2 12h12"/><path d="M30 14 L23 7 A3.5 3.5 0 0 1 30 4 A3.5 3.5 0 0 1 37 7 Z"/><rect x="48" y="4" width="10" height="11" rx="1"/></g></svg>
  <div class="img" style="left:0;top:62px;width:219px;height:275px;background:radial-gradient(ellipse 80px 40px at 90px 90px,#a27256 60%,transparent 64%),radial-gradient(ellipse 60px 130px at 60px 160px,#b98566 60%,transparent 64%),radial-gradient(ellipse 100px 25px at 170px 60px,#9c6a4e 60%,transparent 64%),linear-gradient(#c6ccd3,#d8dde2 60%,#e8ebee)"></div>
  <div class="t" style="left:86px;top:341px;font-size:8px;color:#bbb;letter-spacing:1px">●<span style="color:#555">●</span>●●●●</div>
  <div class="t" style="left:11px;top:369px;font-size:7.5px">Syracuse mitten</div>
  <div class="t b" style="left:11px;top:388px;font-size:7px">1.200 €</div>
  <div class="t" style="left:11px;top:430px;font-size:6.5px">Our bold sculpted mitten will give the</div>
  <div class="t" style="left:11px;top:448px;font-size:6.5px">edge to any outfit. Choose between gold</div>
  <div class="t" style="left:11px;top:466px;font-size:6.5px">and silver version, or if you are super</div>
  <div class="hb"></div>
</div>

<!-- Added -->
<div class="ph" style="left:1288px;top:2734px">
  <div class="notch"></div>
  <div class="sb" style="height:57px"></div><div class="tm">9:41</div>
  <svg class="sic" width="30" height="7"><rect x="0" y="4" width="2" height="3" fill="#222"/><rect x="3" y="3" width="2" height="4" fill="#222"/><rect x="6" y="1" width="2" height="6" fill="#222"/><path d="M12 3 Q15 0 18 3 L15 7Z" fill="#222"/><rect x="21" y="1" width="9" height="5" rx="1" fill="#222"/></svg>
  <div class="lg" style="top:36px;font-size:8px">l'objet</div>
  <svg class="hic" width="62" height="16" style="top:33px"><g fill="none" stroke="#999" stroke-width="1"><path d="M2 4h12M2 8h12M2 12h12"/><path d="M30 14 L23 7 A3.5 3.5 0 0 1 30 4 A3.5 3.5 0 0 1 37 7 Z"/><rect x="48" y="4" width="10" height="11" rx="1"/></g></svg>
  <div class="img" style="left:0;top:57px;width:219px;height:147px;background:radial-gradient(ellipse 60px 60px at 70px 90px,#b98566 60%,transparent 64%),linear-gradient(#c6ccd3,#e0e3e6)"></div>
  <div style="position:absolute;left:0;top:204px;width:219px;height:145px;background:#f3efea"></div>
  <div class="t" style="left:105px;top:208px;font-size:7px;color:#555">●</div>
  <div class="t" style="left:11px;top:236px;font-size:7px">Syracuse mitten</div>
  <div class="t b" style="left:11px;top:255px;font-size:7px">1.200 €</div>
  <div class="t" style="left:11px;top:298px;font-size:6px">Our bold sculpted mitten will give the</div>
  <div class="t" style="left:11px;top:316px;font-size:6px">edge to any outfit. Choose between gold</div>
  <div class="t" style="left:11px;top:335px;font-size:6px">and silver version, or if you are super</div>
  <div style="position:absolute;left:0;top:0;width:219px;height:349px;background:rgba(110,110,110,.28)"></div>
  <div class="t b" style="left:0;width:219px;text-align:center;top:376px;font-size:7.5px">Added!</div>
  <div class="obtn" style="left:11px;top:412px;width:198px;height:19px">SEE YOUR SHOPPING BAG</div>
  <div class="btn" style="left:11px;top:447px;width:198px;height:19px">CONTINUE SHOPPING</div>
  <div class="hb"></div>
</div>

<!-- Remove / shipping -->
<div class="st stw" style="left:1302px;top:3780px;width:206px;height:457px">
  <div class="t" style="left:12px;top:38px;font-size:6px;color:#aaa">Zipcode</div><div class="t" style="left:12px;top:49px;font-size:6px">80331</div><div class="ln" style="left:12px;top:61px;width:182px;background:#999"></div>
  <div class="t" style="left:12px;top:77px;font-size:6px;color:#aaa">City</div><div class="t" style="left:12px;top:88px;font-size:6px">Munich</div><div class="ln" style="left:12px;top:100px;width:182px;background:#999"></div>
  <div class="t" style="left:12px;top:115px;font-size:6px;color:#aaa">Phone Number</div>
  <div style="position:absolute;left:12px;top:137px;width:182px;height:19px;background:#dccbbd"></div><div class="t b" style="left:24px;top:143px;font-size:5.5px">+49 Germany</div><div class="t" style="left:181px;top:140px;color:#888">⌄</div>
  <div class="t" style="left:12px;top:164px;font-size:6px">160 22 33 44</div><div class="ln" style="left:12px;top:174px;width:182px;background:#999"></div>
  <div class="t b" style="left:12px;top:196px;font-size:6px">Delivery Method</div>
  <div class="box" style="left:12px;top:224px;width:182px;height:40px"></div><div class="rad" style="left:26px;top:235px"></div><div class="t" style="left:40px;top:235px;font-size:6px">UPS Standard</div><div class="t" style="left:162px;top:235px;font-size:6px">FREE</div><div class="t" style="left:40px;top:247px;font-size:5.5px;color:#999">Delivered in 3-4 work days</div>
  <div class="box" style="left:12px;top:282px;width:182px;height:40px"></div><div class="rad" style="left:26px;top:293px"></div><div class="t" style="left:40px;top:293px;font-size:6px">UPS Express</div><div class="t" style="left:168px;top:293px;font-size:6px">30€</div><div class="t" style="left:40px;top:305px;font-size:5.5px;color:#999">Delivered in 1-2 work days</div>
  <div class="box" style="left:12px;top:340px;width:182px;height:43px"></div><div class="rad" style="left:26px;top:352px"></div><div class="t" style="left:40px;top:352px;font-size:6px">DHL</div><div class="t" style="left:162px;top:352px;font-size:6px">FREE</div><div class="t" style="left:40px;top:364px;font-size:5.5px;color:#999">Delivered in 3-4 work days</div>
  <div class="btn" style="left:12px;top:408px;width:182px;height:19px">PROCEED WITH PAYMENT</div>
</div>
<div class="ph" style="left:1288px;top:3310px">
  <div class="notch"></div>
  <div class="sb" style="height:57px"></div><div class="tm">9:41</div>
  <svg class="sic" width="30" height="7"><rect x="0" y="4" width="2" height="3" fill="#222"/><rect x="3" y="3" width="2" height="4" fill="#222"/><rect x="6" y="1" width="2" height="6" fill="#222"/><path d="M12 3 Q15 0 18 3 L15 7Z" fill="#222"/><rect x="21" y="1" width="9" height="5" rx="1" fill="#222"/></svg>
  <div class="lg" style="top:36px;font-size:8px">l'objet</div>
  <svg class="hic" width="62" height="16" style="top:33px"><g fill="none" stroke="#999" stroke-width="1"><path d="M2 4h12M2 8h12M2 12h12"/><path d="M30 14 L23 7 A3.5 3.5 0 0 1 30 4 A3.5 3.5 0 0 1 37 7 Z"/><rect x="48" y="4" width="10" height="11" rx="1"/></g></svg>
  <div class="card" style="left:11px;top:69px;width:198px;height:137px"><div class="cimg" style="left:7px;top:22px;width:72px;height:98px"></div>
   <div class="t" style="left:162px;top:21px;font-size:5.5px;text-decoration:underline;color:#aaa">Remove</div>
   <div class="t b" style="left:93px;top:44px;font-size:6px">Syracuse miten</div><div class="t" style="left:93px;top:61px;font-size:6px;color:#999">Yellow Gold</div><div class="t" style="left:93px;top:78px;font-size:6px;color:#999">Size OS</div><div class="t" style="left:93px;top:95px;font-size:6px;color:#999">QTY 1</div><div class="t b" style="left:93px;top:113px;font-size:6px">1.200€</div></div>
  <div class="t" style="left:11px;top:234px;font-size:5.5px;color:#aaa">2 / 3</div>
  <div class="t b" style="left:11px;top:252px;font-size:5.5px">Shipping details</div>
  <div class="t" style="left:11px;top:277px;font-size:5.5px;color:#aaa">First Name</div><div class="t" style="left:11px;top:289px;font-size:5.5px">Iva</div><div class="ln" style="left:11px;top:298px;width:198px"></div>
  <div class="t" style="left:11px;top:320px;font-size:5.5px;color:#aaa">Last Name</div><div class="t" style="left:11px;top:331px;font-size:5.5px">Flowers</div><div class="ln" style="left:11px;top:342px;width:198px"></div>
  <div class="t" style="left:11px;top:364px;font-size:5.5px;color:#aaa">Country</div><div class="t" style="left:11px;top:374px;font-size:5.5px">Germany</div><div class="t" style="left:200px;top:362px;font-size:7px;color:#aaa">⌄</div><div class="ln" style="left:11px;top:387px;width:198px"></div>
  <div class="t" style="left:11px;top:406px;font-size:5.5px;color:#aaa">Address</div><div class="t" style="left:11px;top:417px;font-size:5.5px">Blumenstr 16</div><div class="ln" style="left:11px;top:430px;width:198px"></div>
  <div class="t" style="left:11px;top:447px;font-size:5.5px;color:#aaa">Company name, apartment, suite...</div><div class="ln" style="left:11px;top:468px;width:198px"></div>
</div>

<!-- Confirmation -->
<div class="ph" style="left:1288px;top:4315px">
  <div class="notch"></div>
  <div class="sb" style="height:59px"></div><div class="tm" style="top:18px">9:41</div>
  <svg class="sic" width="30" height="7" style="top:19px"><rect x="0" y="4" width="2" height="3" fill="#222"/><rect x="3" y="3" width="2" height="4" fill="#222"/><rect x="6" y="1" width="2" height="6" fill="#222"/><path d="M12 3 Q15 0 18 3 L15 7Z" fill="#222"/><rect x="21" y="1" width="9" height="5" rx="1" fill="#222"/></svg>
  <div class="lg" style="top:41px;font-size:8px">l'objet</div>
  <svg class="hic" width="62" height="16" style="top:37px"><g fill="none" stroke="#999" stroke-width="1"><path d="M2 4h12M2 8h12M2 12h12"/><path d="M30 14 L23 7 A3.5 3.5 0 0 1 30 4 A3.5 3.5 0 0 1 37 7 Z"/><rect x="48" y="4" width="10" height="11" rx="1"/></g></svg>
  <div class="t" style="left:7px;top:87px;font-size:6.5px">Thank you, Iva.</div>
  <div class="t" style="left:7px;top:107px;font-size:6px;line-height:10.5px">We have received your order. You will<br>receive an email containing a tracking<br>number when we prepare your items.</div>
  <div class="t" style="left:7px;top:149px;font-size:6px;line-height:10.5px">If you have any questions, email us at<br><u>customercare@lobjet.com</u></div>
  <div class="t" style="left:7px;top:181px;font-size:6px;line-height:10.5px">For all returns, contact please<br><u>returns&amp;reclamations@lobjet.com</u><br>mentioning your order number and the<br>item number.</div>
  <div class="ln" style="left:7px;top:243px;width:202px"></div>
  <div class="t b" style="left:7px;top:262px;font-size:6px;line-height:10.5px">Order<br>#001281655</div>
  <div class="t" style="left:117px;top:262px;font-size:6px;line-height:10.5px;text-align:right;width:92px">16.01.2023, 14:59 PM<br><u style="color:#aaa">GMT+1</u></div>
  <div class="ln" style="left:7px;top:293px;width:202px"></div>
  <div class="t b" style="left:7px;top:311px;font-size:6px;line-height:10.5px">Delivery<br>address</div>
  <div class="t b" style="left:116px;top:311px;font-size:6px;line-height:10.5px">Billing<br>address</div>
  <div class="t" style="left:7px;top:342px;font-size:6px;line-height:10.5px;color:#aaa">Iva Flowers<br>16 Blumenstr<br>803330 Munich<br>Germany<br>T: +49 160 22 33 44</div>
  <div class="t" style="left:116px;top:342px;font-size:6px;line-height:10.5px;color:#aaa">Iva Flowers<br>16 Blumenstr<br>803330 Munich<br>Germany<br>T: +49 160 22 33 44</div>
  <div class="t b" style="left:7px;top:425px;font-size:6.5px">Payment method</div>
  <div class="t" style="left:7px;top:439px;font-size:6px;color:#aaa">Mastercard</div>
  <div class="t b" style="left:7px;top:467px;font-size:6.5px">Shipping method</div>
  <div class="t" style="left:7px;top:481px;font-size:6px;color:#aaa">UPS Standard</div>
</div>

<!-- ===== ANNOTATIONS ===== -->
<div class="line" style="left:343px;top:802px;width:57px"></div><div class="dot" style="left:343px;top:802px"></div>
<div class="an" style="left:410px;top:790px">Home screen is simple and<br>made for scrolling.<br><br>Visually, bold titles and<br>images<br>dominate the screen and<br>serve<br>as a starting point for<br>further exploring.</div>

<div class="line" style="left:918px;top:525px;width:55px"></div><div class="dot" style="left:918px;top:525px"></div>
<div class="an" style="left:986px;top:513px">Inside of the burger menu,<br>hide different jewellery<br>categories as well as the<br>search field.</div>

<div class="line" style="left:1491px;top:879px;width:59px"></div><div class="dot" style="left:1491px;top:879px"></div>
<div class="an" style="left:1560px;top:866px">Collection screen always offer<br>a short collection description<br>and inspiration behind it.</div>

<div class="line" style="left:686px;top:1158px;width:57px"></div><div class="dot" style="left:743px;top:1158px"></div>
<div class="an" style="left:449px;top:1147px">After getting the search<br>result, user can filter them<br>further to narrow down the<br>selection.</div>

<div class="line" style="left:686px;top:1768px;width:57px"></div><div class="dot" style="left:743px;top:1768px"></div>
<div class="an" style="left:449px;top:1757px">Once filter applied, user can<br>easily add, remove or<br>change them by clicking on<br>the chips.<br><br>Result shows up<br>automatically once filter is<br>chosen.</div>

<div class="line" style="left:1261px;top:1422px;width:57px"></div><div class="dot" style="left:1318px;top:1422px"></div>
<div class="an" style="left:1025px;top:1410px">Photos of the product<br>should have natural, almost<br>accidental style.<br><br>Images are either b&amp;w or<br>with soft light and neutral<br>backgrounds.<br><br>Shown is either product on<br>models or jewellery close<br>ups. Preferably,<br>photographs do not show<br>models “posing” but rather<br>caught up in spontaneous<br>actions.<br><br>Images should reflect the<br>values of the brand and<br>include all races, genders<br>and styles. Models shown<br>are often with tattoos or not<br>a typical fashion industry<br>model types.</div>

<div class="line" style="left:1491px;top:1672px;width:59px"></div><div class="dot" style="left:1491px;top:1672px"></div>
<div class="an" style="left:1560px;top:1662px">In the bottom of the screen,<br>user can find additional<br>suggestions that might<br>inspire them to find more<br>pieces and discover<br>additional styles.</div>

<div class="line" style="left:331px;top:2177px;width:59px"></div><div class="dot" style="left:331px;top:2177px"></div>
<div class="an" style="left:399px;top:2166px">Writing style is cheeky and<br>playful. Names of<br>collections are play of words<br>alluding to jewellery and<br>precious metals.</div>

<div class="line" style="left:1224px;top:2367px;width:92px"></div><div class="dot" style="left:1316px;top:2367px"></div>
<div class="line" style="left:921px;top:2477px;width:55px"></div><div class="dot" style="left:921px;top:2477px"></div>
<div class="an" style="left:987px;top:2356px">Product page consists of<br>more detailed information<br>about the product as well<br>as offering different options<br>when it comes to the<br>material and size.<br><br>User can easily see full size<br>photos by clicking on them<br>or see another image by<br>swiping.</div>

<div class="line" style="left:1491px;top:2586px;width:59px"></div><div class="dot" style="left:1491px;top:2586px"></div>
<div class="an" style="left:1560px;top:2575px">Drop down menu is for<br>adjusting available options.</div>

<div class="line" style="left:921px;top:2809px;width:55px"></div><div class="dot" style="left:921px;top:2809px"></div>
<div class="an" style="left:986px;top:2797px">Drop down menu is for<br>adjusting available options.</div>

<div class="line" style="left:343px;top:3055px;width:57px"></div><div class="dot" style="left:343px;top:3055px"></div>
<div class="an" style="left:409px;top:3043px">Shopping bag empty</div>

<div class="line" style="left:1491px;top:3117px;width:59px"></div><div class="dot" style="left:1491px;top:3117px"></div>
<div class="an" style="left:1560px;top:3105px">After product has been<br>added to the bag, a<br>overflow pops up in the<br>bottom of the screen<br>notifying user and offering<br>either to go straight to<br>shopping bag or keep on<br>browsing.</div>

<div class="line" style="left:918px;top:3283px;width:58px"></div><div class="dot" style="left:918px;top:3283px"></div>
<div class="an" style="left:986px;top:3271px">When buying the product,<br>user has option to sign up/<br>login or continue as a guest<br>with just an email address.<br><br>This option is appealing to<br>many customers that don't<br>want to create yet another<br>account or are annoyed<br>with potential spam mail.</div>

<div class="line" style="left:1491px;top:3430px;width:59px"></div><div class="dot" style="left:1491px;top:3430px"></div>
<div class="an" style="left:1560px;top:3419px">If user changes their mind,<br>they can simply remove the<br>product from the bag.<br><br>this option is convenient<br>especially in cases when<br>there is more than one item<br>in the bag and user decides<br>to buy just some of them.</div>

<div class="line" style="left:343px;top:3607px;width:57px"></div><div class="dot" style="left:343px;top:3607px"></div>
<div class="an" style="left:409px;top:3596px">Shopping bag full</div>

<div class="line" style="left:918px;top:3965px;width:58px"></div><div class="dot" style="left:918px;top:3965px"></div>
<div class="an" style="left:986px;top:3953px">If user change their mind<br>about payment method,<br>they can change it during<br>the payment process<br>without loosing all the filled<br>up information they added<br>in the previous step.</div>

<div class="line" style="left:1491px;top:4033px;width:59px"></div><div class="dot" style="left:1491px;top:4033px"></div>
<div class="an" style="left:1560px;top:4023px">Deciding on the best<br>delivery option is offered on<br>the bottom of the shipment<br>details screen.<br><br>Customer has overview of<br>the available options in<br>terms of cost and time and<br>they can choose the one<br>that fits the best.</div>

<div class="line" style="left:343px;top:4179px;width:57px"></div><div class="dot" style="left:343px;top:4179px"></div>
<div class="an" style="left:409px;top:4167px">Payment methods are<br>versatile to accommodate<br>different needs.<br><br>User chooses the one best<br>for them by clicking on<br>radio button.</div>

<div class="line" style="left:918px;top:4572px;width:58px"></div><div class="dot" style="left:918px;top:4572px"></div>
<div class="an" style="left:986px;top:4560px">Payment summary screen<br>is the last one before<br>confirming the payment.<br>This is very important<br>screen since it is the last<br>chance for user to edit their<br>purchase.<br><br>This is why all the<br>information that user<br>entered is clearly<br>communicated and has<br>edit option for each section<br>in case something is not<br>correct.</div>

<div class="line" style="left:1491px;top:4550px;width:59px"></div><div class="dot" style="left:1491px;top:4550px"></div>
<div class="an" style="left:1560px;top:4539px">Confirmation screen<br>informs user about their<br>shipping details, as well as<br>contact data for any<br>potential issues.</div>
</body></html>
